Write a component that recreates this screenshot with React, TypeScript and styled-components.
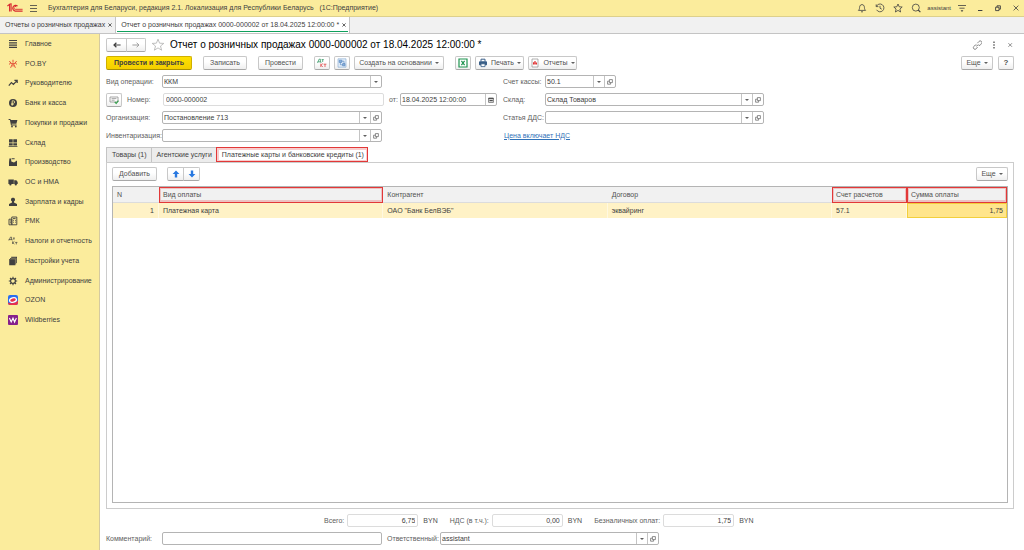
import React from "react";
import styled, { createGlobalStyle, css } from "styled-components";

const GlobalStyle = createGlobalStyle`
  *, *::before, *::after { box-sizing: border-box; }
  body { margin: 0; background: #fff; }
  body, button, input, select {
    font-family: "Liberation Sans", Arial, sans-serif;
    font-size: 7px;
    line-height: 10px;
    color: #404040;
  }
  svg { flex: none; }
`;

const Shell = styled.div`
  display: flex;
  flex-direction: column;
  min-height: 100vh;
`;

/* ---------- window chrome ---------- */

const TitleBar = styled.header`
  display: flex;
  align-items: center;
  height: 17px;
  padding: 0 3px 0 7px;
  background: #fbec9c;
  border-bottom: 1px solid #ddd08c;
`;

const AppName = styled.span`
  margin-left: 5px;
  white-space: pre;
`;

const Tools = styled.div`
  display: flex;
  align-items: center;
  gap: 8px;
  margin-left: auto;
`;

const User = styled.span`
  margin: 0 -2px;
  font-size: 6px;
`;

const PlainButton = styled.button`
  display: flex;
  align-items: center;
  justify-content: center;
  flex: none;
  padding: 0;
  border: 0;
  background: none;
`;

const WindowTabs = styled.nav`
  display: flex;
  height: 17px;
  background: #f1f1f1;
  border-bottom: 1px solid #c4c4c4;
`;

const WindowTab = styled.div<{ $active?: boolean }>`
  padding: 0 1px;
  border-right: 1px solid #c4c4c4;
  background: ${(p) => (p.$active ? "#fff" : "none")};
`;

const TabBody = styled.div<{ $active?: boolean }>`
  display: flex;
  align-items: center;
  gap: 3px;
  height: 15px;
  padding: 1px 2px 0 4px;
  border-bottom: 1px solid ${(p) => (p.$active ? "#0fa05c" : "transparent")};
`;

const TabLink = styled.a`
  color: #404040;
  text-decoration: none;
  white-space: nowrap;
`;

/* ---------- sections ---------- */

const Body = styled.div`
  display: flex;
  flex: 1;
`;

const Sidebar = styled.nav`
  flex: none;
  width: 100px;
  background: #fbec9c;
  border-right: 1px solid #d5caa0;
`;

const SectionList = styled.ul`
  display: flex;
  flex-direction: column;
  height: 296px;
  margin: 0;
  padding: 0;
  list-style: none;
`;

const Section = styled.li`
  display: flex;
  flex: 1;
`;

const SectionLink = styled.a`
  display: flex;
  align-items: center;
  gap: 7px;
  padding-left: 8px;
  color: #404040;
  text-decoration: none;
  white-space: nowrap;
`;

/* ---------- document form ---------- */

const Main = styled.main`
  display: flex;
  flex: 1;
  flex-direction: column;
  min-width: 0;
  padding: 4px 10px 5px 6px;
`;

const Heading = styled.div`
  display: flex;
  align-items: center;
  height: 14px;
`;

const Title = styled.h1`
  margin: 0 auto 0 0;
  font-size: 10px;
  font-weight: 400;
  line-height: 12px;
  color: #000;
  white-space: nowrap;
`;

const HeadTools = styled.div`
  display: flex;
  align-items: center;
  gap: 6px;
`;

const Button = styled.button<{ $w?: number; $primary?: boolean }>`
  display: flex;
  align-items: center;
  justify-content: center;
  gap: 3px;
  flex: none;
  width: ${(p) => (p.$w ? `${p.$w}px` : "auto")};
  height: 14px;
  padding: 0;
  border: 1px solid #c8c8c8;
  border-bottom-color: #a8a8a8;
  border-radius: 2px;
  background: linear-gradient(#fff 40%, #efefef);
  color: #505050;
  white-space: nowrap;
  ${(p) =>
    p.$primary &&
    css`
      border-color: #d0b000;
      border-bottom-color: #a89000;
      background: linear-gradient(#ffe100, #f3cf00);
      color: #404040;
      font-weight: 700;
    `}
`;

const HelpMark = styled.b`
  font-size: 8px;
`;

const Pair = styled.div`
  display: flex;
  & > button:first-child {
    border-radius: 2px 0 0 2px;
  }
  & > button:last-child {
    margin-left: -1px;
    border-radius: 0 2px 2px 0;
  }
`;

const CommandBar = styled.div`
  display: flex;
  align-items: center;
  gap: 11px;
  margin-top: 4px;
`;

const ButtonGroup = styled.div<{ $end?: boolean }>`
  display: flex;
  gap: ${(p) => (p.$end ? "5px" : "4px")};
  margin-left: ${(p) => (p.$end ? "auto" : "0")};
`;

const Caret = styled.span`
  flex: none;
  width: 0;
  height: 0;
  border: 2px solid transparent;
  border-top-color: #606060;
  border-bottom: 0;
`;

const Form = styled.div`
  display: flex;
  gap: 6px;
  margin-top: 5px;
`;

const Column = styled.div<{ $w: number }>`
  display: flex;
  flex-direction: column;
  flex: none;
  gap: 5px;
  width: ${(p) => p.$w}px;
`;

const Row = styled.div`
  display: flex;
  align-items: center;
  height: 13px;
`;

const Label = styled.label<{ $w?: number; $inset?: number }>`
  flex: none;
  width: ${(p) => (p.$w ? `${p.$w}px` : "auto")};
  padding-left: ${(p) => p.$inset ?? 0}px;
  color: #606060;
  white-space: nowrap;
`;

const Box = styled.div<{ $w: number; $quiet?: boolean }>`
  display: flex;
  flex: none;
  width: ${(p) => p.$w}px;
  height: 13px;
  padding: 0 ${(p) => (p.$quiet ? 1 : 0)}px;
  border: 1px solid ${(p) => (p.$quiet ? "#dcdcdc" : "#b4b4b4")};
  border-radius: 2px;
  background: #fff;
`;

const entry = css`
  appearance: none;
  flex: 1;
  min-width: 0;
  height: 11px;
  padding: 0 1px;
  border: 0;
  background: none;
  outline: 0;
`;

const Input = styled.input<{ $right?: boolean }>`
  ${entry}
  text-align: ${(p) => (p.$right ? "right" : "left")};
`;

const Select = styled.select`
  ${entry}
`;

const Side = styled.span`
  display: flex;
  align-items: center;
  justify-content: center;
  flex: none;
  width: 11px;
  border-left: 1px solid #c4c4c4;
`;

const SideButton = styled.button`
  display: flex;
  align-items: center;
  justify-content: center;
  flex: none;
  width: 11px;
  padding: 0;
  border: 0 solid #c4c4c4;
  border-left-width: 1px;
  background: none;
`;

const TextLink = styled.a`
  margin-left: 1px;
  color: #3072b8;
  text-decoration: underline;
`;

/* ---------- tabs and table ---------- */

const marked = css`
  outline: 1px solid #e23838;
  outline-offset: -1px;
  box-shadow: inset 0 0 0 2px rgba(226, 56, 56, 0.25);
`;

const PageTabs = styled.div`
  display: flex;
  height: 15px;
  margin-top: 5px;
`;

const PageTab = styled.button<{ $marked?: boolean }>`
  padding: 0 4px 0 5px;
  border: 1px solid #c4c4c4;
  border-right-width: 0;
  border-bottom: 0;
  background: #ececec;
  white-space: nowrap;
  ${(p) =>
    p.$marked &&
    css`
      background: #fff;
      ${marked}
    `}
`;

const Page = styled.section`
  display: flex;
  flex: 1;
  flex-direction: column;
  padding: 4px 5px 5px;
  border: 1px solid #cccccc;
`;

const PageBar = styled.div`
  display: flex;
  gap: 10px;
`;

const Grid = styled.div`
  flex: 1;
  margin-top: 5px;
  border: 1px solid #b4b4b4;
`;

const Table = styled.table`
  width: 100%;
  table-layout: fixed;
  border-collapse: separate;
  border-spacing: 0;
`;

const Th = styled.th<{ $marked?: boolean }>`
  height: 16px;
  padding: 0 4px;
  background: #f1f1f1;
  border-bottom: 1px solid #dcdcdc;
  color: #505050;
  font-weight: 400;
  text-align: left;
  ${(p) => p.$marked && marked}
`;

const Td = styled.td<{ $right?: boolean; $current?: boolean }>`
  height: 15px;
  padding: 0 4px;
  background: #fff2c6;
  border-right: 1px solid #fff8e0;
  text-align: ${(p) => (p.$right ? "right" : "left")};
  ${(p) =>
    p.$current &&
    css`
      background: #ffe58c;
      border: 1px solid #f2cf3c;
      padding: 0 3px;
    `}
`;

const Totals = styled.div`
  display: flex;
  align-items: center;
  gap: 4px;
  height: 13px;
  margin-top: 5px;
  padding-left: 218px;
`;

const Total = styled.div`
  display: flex;
  align-items: center;
  gap: 3px;
  margin-right: 8px;
`;

const Currency = styled.span`
  margin-left: 2px;
  color: #505050;
`;

const Footer = styled.div`
  display: flex;
  align-items: center;
  height: 13px;
  margin-top: 5px;
`;

/* ---------- icons ---------- */

type IconProps = { size?: number; box?: number; children: React.ReactNode; color?: string; w?: number };
const Icon = ({ size = 10, box = 10, color = "#404040", w = 1, children }: IconProps) => (
  <svg width={size} height={size} viewBox={`0 0 ${box} ${box}`} fill="none" stroke={color} strokeWidth={w} aria-hidden="true">
    {children}
  </svg>
);

const Cross = () => (
  <Icon size={4} box={4}>
    <path d="M.4 .4L3.6 3.6M3.6 .4L.4 3.6" strokeWidth=".8" />
  </Icon>
);

const Logo = () => (
  <svg width="16" height="10" viewBox="0 0 16 10" fill="none" stroke="#d8282f" strokeWidth="1.1" aria-hidden="true">
    <path d="M.4 3L2.6 1.4V8.6M4.1 8.6V.8L3 1" />
    <path d="M10.6 3.1A2.9 2.9 0 1 0 8.2 8.1H15.6" />
    <path d="M9.3 3.9A1.4 1.4 0 1 0 8.2 6.3H15.6" strokeWidth=".9" />
  </svg>
);

const OpenIcon = () => (
  <Icon size={6} box={6} color="#606060" w={0.7}>
    <path d="M2.4 .6H5.4V3.6H2.4ZM2.4 2.2H.6V5.2H3.6V3.6" />
  </Icon>
);

const solid = { fill: "#404040", stroke: "none" };

const icons: Record<string, React.ReactNode> = {
  main: <path d="M1 1.5H9M1 3.8H9M1 6.1H9M1 8.4H9" strokeWidth="1.2" />,
  poby: (
    <g stroke="#e0402c" strokeWidth=".9">
      <path d="M5 .8V3.4M1.4 2L2.8 4L1 5.4M8.6 2L7.2 4L9 5.4M2.8 4.4H7.2M4.4 5L2.6 8.8M5.6 5L7.4 8.8M5 5.6V7.6" />
    </g>
  ),
  chart: <path d="M.8 7.6L3.4 4.6L5.4 6.4L9 2.6M6.4 2.4H9.2V5" strokeWidth="1.2" />,
  bank: (
    <>
      <circle cx="5" cy="5" r="4" {...solid} />
      <path d="M4.2 7.8V2.8H5.4A1.2 1.2 0 0 1 5.4 5.3H3.2M3.2 6.5H5.6" stroke="#fbec9c" strokeWidth=".8" />
    </>
  ),
  cart: (
    <g {...solid}>
      <path d="M.6 1H2.4L2.8 2H9.4L8.4 5.8H3.6L3.8 6.6H8.6V7.4H3L1.9 1.9H.6Z" />
      <circle cx="4" cy="8.5" r=".9" />
      <circle cx="7.8" cy="8.5" r=".9" />
    </g>
  ),
  store: <path d="M1 1.2H4.7V4.5H1ZM5.3 1.2H9V4.5H5.3ZM1 5.2H4.7V7.4H1ZM5.3 5.2H9V7.4H5.3ZM.6 8H9.4V8.8H.6Z" {...solid} />,
  factory: <path d="M1 9V5.2L1.4 1.4H3L3.3 4.4L6 5.6L9 3.4V9ZM3.6 1.2H6.6V2.2H3.6Z" {...solid} />,
  truck: (
    <g {...solid}>
      <path d="M.4 2.4H5.8V7H.4ZM6.2 3.2H8.4L9.7 5V7H6.2Z" />
      <circle cx="2.4" cy="7.4" r="1.1" />
      <circle cx="7.8" cy="7.4" r="1.1" />
    </g>
  ),
  person: <path d="M5 .8A1.9 1.9 0 0 1 6 4.4V5.4L9 7V9H1V7L4 5.4V4.4A1.9 1.9 0 0 1 5 .8Z" {...solid} />,
  pos: (
    <path d="M3.8 1H8.8V8.8H3.8ZM1 3.2H3.8V8.8H1ZM5 2.6H7.6M5 4.4H5.8M7 4.4H7.8M5 6.2H5.8M7 6.2H7.8M2 5H3M2 6.8H3" strokeWidth=".9" />
  ),
  taxes: (
    <path d="M1.4 3.6L2.4 1.2H3.6V3.6M.8 4.4V3.6H4.2V4.4M5 2H6.8M5.9 2V3.8M4.6 5.4V8M6.4 5.4L4.8 6.8L6.4 8M7.2 6.4H9.4M8.3 6.4V8.4" strokeWidth=".7" />
  ),
  books: (
    <>
      <path d="M3.2 .8H9V7H8.2V8.2H7.4V9.2H1.2V3H2V2H3.2Z" {...solid} />
      <path d="M2 3H7.4V8.6M3.2 2H8.2V7.6" stroke="#fbec9c" strokeWidth=".3" />
    </>
  ),
  gear: (
    <>
      <circle cx="5" cy="5" r="2.4" strokeWidth="1.2" />
      <path d="M5 .8V2.4M5 7.6V9.2M.8 5H2.4M7.6 5H9.2M2 2L3.2 3.2M6.8 6.8L8 8M8 2L6.8 3.2M3.2 6.8L2 8" strokeWidth="1.1" />
    </>
  ),
  ozon: (
    <g stroke="none">
      <rect width="10" height="10" rx="2" fill="#2a6ef0" />
      <path d="M0 7.4C3 9 7.4 8 10 5.4V8A2 2 0 0 1 8 10H2A2 2 0 0 1 0 8Z" fill="#e8304c" />
      <ellipse cx="5" cy="5" rx="3.5" ry="2.3" transform="rotate(-14 5 5)" fill="#e8304c" stroke="#fff" strokeWidth="1.3" />
    </g>
  ),
  wb: (
    <>
      <rect width="10" height="10" rx="1" fill="#86208c" stroke="none" />
      <path d="M1.4 3L3.2 7L5 3.2L6.6 7L8.4 3" stroke="#fff" strokeWidth="1.1" />
    </>
  ),
};

const sections: [string, string][] = [
  ["main", "Главное"],
  ["poby", "PO.BY"],
  ["chart", "Руководителю"],
  ["bank", "Банк и касса"],
  ["cart", "Покупки и продажи"],
  ["store", "Склад"],
  ["factory", "Производство"],
  ["truck", "ОС и НМА"],
  ["person", "Зарплата и кадры"],
  ["pos", "РМК"],
  ["taxes", "Налоги и отчетность"],
  ["books", "Настройки учета"],
  ["gear", "Администрирование"],
  ["ozon", "OZON"],
  ["wb", "Wildberries"],
];

const Lookup = ({ id, value, w, open = true }: { id: string; value: string; w: number; open?: boolean }) => (
  <Box $w={w}>
    <Select id={id} defaultValue={value}>
      <option>{value}</option>
    </Select>
    <Side>
      <Caret />
    </Side>
    {open && (
      <SideButton aria-label="Открыть">
        <OpenIcon />
      </SideButton>
    )}
  </Box>
);

const totals: [string, string, string][] = [
  ["sum", "Всего:", "6,75"],
  ["vat", "НДС (в т.ч.):", "0,00"],
  ["cashless", "Безналичных оплат:", "1,75"],
];

export default function App() {
  return (
    <Shell>
      <GlobalStyle />
      <TitleBar>
        <Logo />
        <PlainButton aria-label="Меню">
          <Icon size={20} box={20}>
            <path d="M7 7.5H14M7 10.5H14M7 13.5H14" strokeWidth=".8" />
          </Icon>
        </PlainButton>
        <AppName>{"Бухгалтерия для Беларуси, редакция 2.1. Локализация для Республики Беларусь   (1С:Предприятие)"}</AppName>
        <Tools>
          <PlainButton aria-label="Уведомления">
            <Icon w={0.8}>
              <path d="M1.4 7.4C2.8 6.4 2.4 4.6 2.8 3.2A2.3 2.3 0 0 1 7.2 3.2C7.6 4.6 7.2 6.4 8.6 7.4ZM4 8.8H6" />
            </Icon>
          </PlainButton>
          <PlainButton aria-label="История">
            <Icon w={0.8}>
              <path d="M1.4 3.4A3.9 3.9 0 1 1 1.6 6.8M1.2 1.4V3.6H3.4M5 2.8V5.2L6.8 6.2" />
            </Icon>
          </PlainButton>
          <PlainButton aria-label="Избранное">
            <Icon w={0.8}>
              <path d="M5 1L6.2 3.8L9.2 4L6.9 6L7.6 9L5 7.4L2.4 9L3.1 6L.8 4L3.8 3.8Z" />
            </Icon>
          </PlainButton>
          <PlainButton aria-label="Поиск">
            <Icon w={0.8}>
              <circle cx="4.8" cy="4.6" r="3.5" />
              <path d="M7.2 7L9.4 9.2" strokeWidth="1.1" />
            </Icon>
          </PlainButton>
          <User>assistant</User>
          <PlainButton aria-label="Настройки">
            <Icon w={0.8}>
              <path d="M1 2.5H9M2.4 5.2H7.6" />
              <path d="M3.6 7.2H6.4L5 9Z" {...solid} />
            </Icon>
          </PlainButton>
          <PlainButton aria-label="Свернуть">
            <Icon>
              <path d="M3 7.5H7.4" />
            </Icon>
          </PlainButton>
          <PlainButton aria-label="Восстановить">
            <Icon w={0.9}>
              <path d="M2.6 4.2H6V7.6H2.6ZM4 4.2V2.8H7.4V6.2H6" />
            </Icon>
          </PlainButton>
          <PlainButton aria-label="Закрыть">
            <Icon w={0.8}>
              <path d="M2.6 2.6L7.4 7.4M7.4 2.6L2.6 7.4" />
            </Icon>
          </PlainButton>
        </Tools>
      </TitleBar>

      <WindowTabs>
        <WindowTab>
          <TabBody>
            <TabLink href="#list">Отчеты о розничных продажах</TabLink>
            <PlainButton aria-label="Закрыть вкладку">
              <Cross />
            </PlainButton>
          </TabBody>
        </WindowTab>
        <WindowTab $active>
          <TabBody $active>
            <TabLink href="#doc">Отчет о розничных продажах 0000-000002 от 18.04.2025 12:00:00 *</TabLink>
            <PlainButton aria-label="Закрыть вкладку">
              <Cross />
            </PlainButton>
          </TabBody>
        </WindowTab>
      </WindowTabs>

      <Body>
        <Sidebar>
          <SectionList>
            {sections.map(([key, name]) => (
              <Section key={key}>
                <SectionLink href={`#${key}`}>
                  <Icon>{icons[key]}</Icon>
                  {name}
                </SectionLink>
              </Section>
            ))}
          </SectionList>
        </Sidebar>

        <Main>
          <Heading>
            <Pair>
              <Button $w={21} aria-label="Назад">
                <Icon size={8} box={8} w={1.2}>
                  <path d="M7.6 4H1M3.4 1.8L1 4L3.4 6.2" />
                </Icon>
              </Button>
              <Button $w={20} aria-label="Вперед">
                <Icon size={8} box={8} color="#a0a0a0">
                  <path d="M.4 4H7M4.6 1.8L7 4L4.6 6.2" />
                </Icon>
              </Button>
            </Pair>
            <PlainButton aria-label="В избранное">
              <Icon size={24} box={24} color="#b0b0b0" w={0.8}>
                <path d="M12 6.2L13.6 10.2L17.8 10.4L14.5 13L15.6 17.2L12 14.9L8.4 17.2L9.5 13L6.2 10.4L10.4 10.2Z" />
              </Icon>
            </PlainButton>
            <Title>Отчет о розничных продажах 0000-000002 от 18.04.2025 12:00:00 *</Title>
            <HeadTools>
              <PlainButton aria-label="Получить ссылку">
                <Icon w={0.8} color="#707070">
                  <path d="M5.4 3.2L7 1.4A1.6 1.6 0 0 1 9.4 3.6L8 5.4H6.6M6.4 4.4L4.6 6.4M5.6 7L4.2 8.8A1.6 1.6 0 0 1 1.8 6.6L3.2 5H4.6" />
                </Icon>
              </PlainButton>
              <PlainButton aria-label="Еще действия">
                <Icon w={1.2}>
                  <path d="M6 1.5V3M6 4.2V5.7M6 6.9V8.4" />
                </Icon>
              </PlainButton>
              <PlainButton aria-label="Закрыть форму">
                <Icon w={0.7} color="#606060">
                  <path d="M4.4 3.2L8 6.8M8 3.2L4.4 6.8" />
                </Icon>
              </PlainButton>
            </HeadTools>
          </Heading>

          <CommandBar>
            <Button $primary $w={86}>Провести и закрыть</Button>
            <Button $w={44}>Записать</Button>
            <Button $w={45}>Провести</Button>
            <ButtonGroup>
              <Button $w={16} aria-label="Дт/Кт">
                <Icon w={0.8} color="#3a9a6a">
                  <path d="M1.2 3.8L2 1.2H3.4V3.8M.6 4.8V3.8H4V4.8M4.6 1.6H6.8M5.7 1.6V4" />
                  <path d="M3.8 5.6V9M5.8 5.6L4 7.2L5.8 9M6.6 6.2H9.4M8 6.2V9" stroke="#e04848" />
                </Icon>
              </Button>
              <Button $w={16} aria-label="Структура подчиненности">
                <Icon w={0.6} color="#7fa6d0">
                  <path d="M1 .8H9V9.2H1Z" fill="#e4eef8" />
                  <path d="M2.2 2.2H4.8V4.4H2.2ZM5.6 5.6H8V7.8H5.6Z" fill="#8fb4dc" stroke="#4a7ebc" />
                  <path d="M3.4 4.4V6.8H5.6M4.8 3.2H7V5.6" stroke="#4a7ebc" />
                </Icon>
              </Button>
              <Button $w={90}>
                Создать на основании <Caret />
              </Button>
            </ButtonGroup>
            <ButtonGroup>
              <Button $w={16} aria-label="Выгрузить в Excel">
                <Icon color="#1e9450" w={1.2}>
                  <path d="M1 1H9V9H1Z" fill="#fff" />
                  <path d="M3.4 2.8L6.6 7.2M6.6 2.8L3.4 7.2" />
                </Icon>
              </Button>
              <Button $w={49}>
                <Icon color="#3a5f88">
                  <path d="M3 3.4V1.2H7V3.4" />
                  <path d="M1.5 3.8H8.5V6.8H1.5Z" fill="#3a5f88" />
                  <path d="M3 5.8H7V8.6H3Z" fill="#fff" strokeWidth=".8" />
                </Icon>
                Печать <Caret />
              </Button>
              <Button $w={49}>
                <Icon color="#909090" w={0.7}>
                  <path d="M2 1H8V9H2Z" fill="#fff" />
                  <path d="M3.6 6.4V4.2M5 6.4V3M6.4 6.4V4.6" stroke="#e03030" strokeWidth="1.2" />
                </Icon>
                Отчеты <Caret />
              </Button>
            </ButtonGroup>
            <ButtonGroup $end>
              <Button $w={32}>
                Еще <Caret />
              </Button>
              <Button $w={16} aria-label="Справка">
                <HelpMark>?</HelpMark>
              </Button>
            </ButtonGroup>
          </CommandBar>

          <Form>
            <Column $w={391}>
              <Row>
                <Label $w={56} htmlFor="operation">Вид операции:</Label>
                <Lookup id="operation" value="ККМ" w={220} open={false} />
              </Row>
              <Row>
                <Button $w={16} aria-label="Проведен">
                  <Icon color="#909090" w={0.8}>
                    <path d="M1 2H9V7H1ZM2.6 3.6H7.4M2.6 5.2H5.6" />
                    <path d="M5.8 7L7.2 8.4L9.4 5.6" stroke="#38a050" strokeWidth="1.2" />
                  </Icon>
                </Button>
                <Label $w={41} $inset={5} htmlFor="number">Номер:</Label>
                <Box $w={221} $quiet>
                  <Input id="number" defaultValue="0000-000002" readOnly />
                </Box>
                <Label $w={16} $inset={5} htmlFor="date">от:</Label>
                <Box $w={97}>
                  <Input id="date" defaultValue="18.04.2025 12:00:00" />
                  <SideButton aria-label="Календарь">
                    <Icon size={6} box={6} w={0.7} color="#505050">
                      <path d="M.6 1H5.4V5.4H.6Z" />
                      <path d="M.6 1.6H5.4M1.4 3.6H4.8" strokeWidth="1.1" />
                    </Icon>
                  </SideButton>
                </Box>
              </Row>
              <Row>
                <Label $w={56} htmlFor="org">Организация:</Label>
                <Lookup id="org" value="Постановление 713" w={220} />
              </Row>
              <Row>
                <Label $w={56} htmlFor="inventory">Инвентаризация:</Label>
                <Lookup id="inventory" value="" w={220} />
              </Row>
            </Column>
            <Column $w={262}>
              <Row>
                <Label $w={42} htmlFor="account">Счет кассы:</Label>
                <Lookup id="account" value="50.1" w={71} />
              </Row>
              <Row>
                <Label $w={42} htmlFor="warehouse">Склад:</Label>
                <Lookup id="warehouse" value="Склад Товаров" w={219} />
              </Row>
              <Row>
                <Label $w={42} htmlFor="flow">Статья ДДС:</Label>
                <Lookup id="flow" value="" w={219} />
              </Row>
              <Row>
                <TextLink href="#price">Цена включает НДС</TextLink>
              </Row>
            </Column>
          </Form>

          <PageTabs>
            <PageTab>Товары (1)</PageTab>
            <PageTab>Агентские услуги</PageTab>
            <PageTab $marked>Платежные карты и банковские кредиты (1)</PageTab>
          </PageTabs>
          <Page>
            <PageBar>
              <Button $w={45}>Добавить</Button>
              <Pair>
                <Button $w={17} aria-label="Вверх">
                  <Icon size={8} box={8}>
                    <path d="M4 .6L7.4 4H5.2V7.4H2.8V4H.6Z" fill="#2878e0" stroke="none" />
                  </Icon>
                </Button>
                <Button $w={17} aria-label="Вниз">
                  <Icon size={8} box={8}>
                    <path d="M4 7.4L.6 4H2.8V.6H5.2V4H7.4Z" fill="#2878e0" stroke="none" />
                  </Icon>
                </Button>
              </Pair>
              <ButtonGroup $end>
                <Button $w={32}>
                  Еще <Caret />
                </Button>
              </ButtonGroup>
            </PageBar>
            <Grid>
              <Table>
                <colgroup>
                  <col width="46" />
                  <col />
                  <col />
                  <col />
                  <col width="75" />
                  <col width="100" />
                </colgroup>
                <thead>
                  <tr>
                    <Th>N</Th>
                    <Th $marked>Вид оплаты</Th>
                    <Th>Контрагент</Th>
                    <Th>Договор</Th>
                    <Th $marked>Счет расчетов</Th>
                    <Th $marked>Сумма оплаты</Th>
                  </tr>
                </thead>
                <tbody>
                  <tr>
                    <Td $right>1</Td>
                    <Td>Платежная карта</Td>
                    <Td>ОАО "Банк БелВЭБ"</Td>
                    <Td>эквайринг</Td>
                    <Td>57.1</Td>
                    <Td $right $current>1,75</Td>
                  </tr>
                </tbody>
              </Table>
            </Grid>
          </Page>

          <Totals>
            {totals.map(([id, name, value]) => (
              <Total key={id}>
                <Label htmlFor={id}>{name}</Label>
                <Box $w={71} $quiet>
                  <Input id={id} $right defaultValue={value} readOnly />
                </Box>
                <Currency>BYN</Currency>
              </Total>
            ))}
          </Totals>
          <Footer>
            <Label $w={56} htmlFor="comment">Комментарий:</Label>
            <Box $w={220}>
              <Input id="comment" />
            </Box>
            <Label $w={58} $inset={5} htmlFor="responsible">Ответственный:</Label>
            <Lookup id="responsible" value="assistant" w={219} />
          </Footer>
        </Main>
      </Body>
    </Shell>
  );
}
